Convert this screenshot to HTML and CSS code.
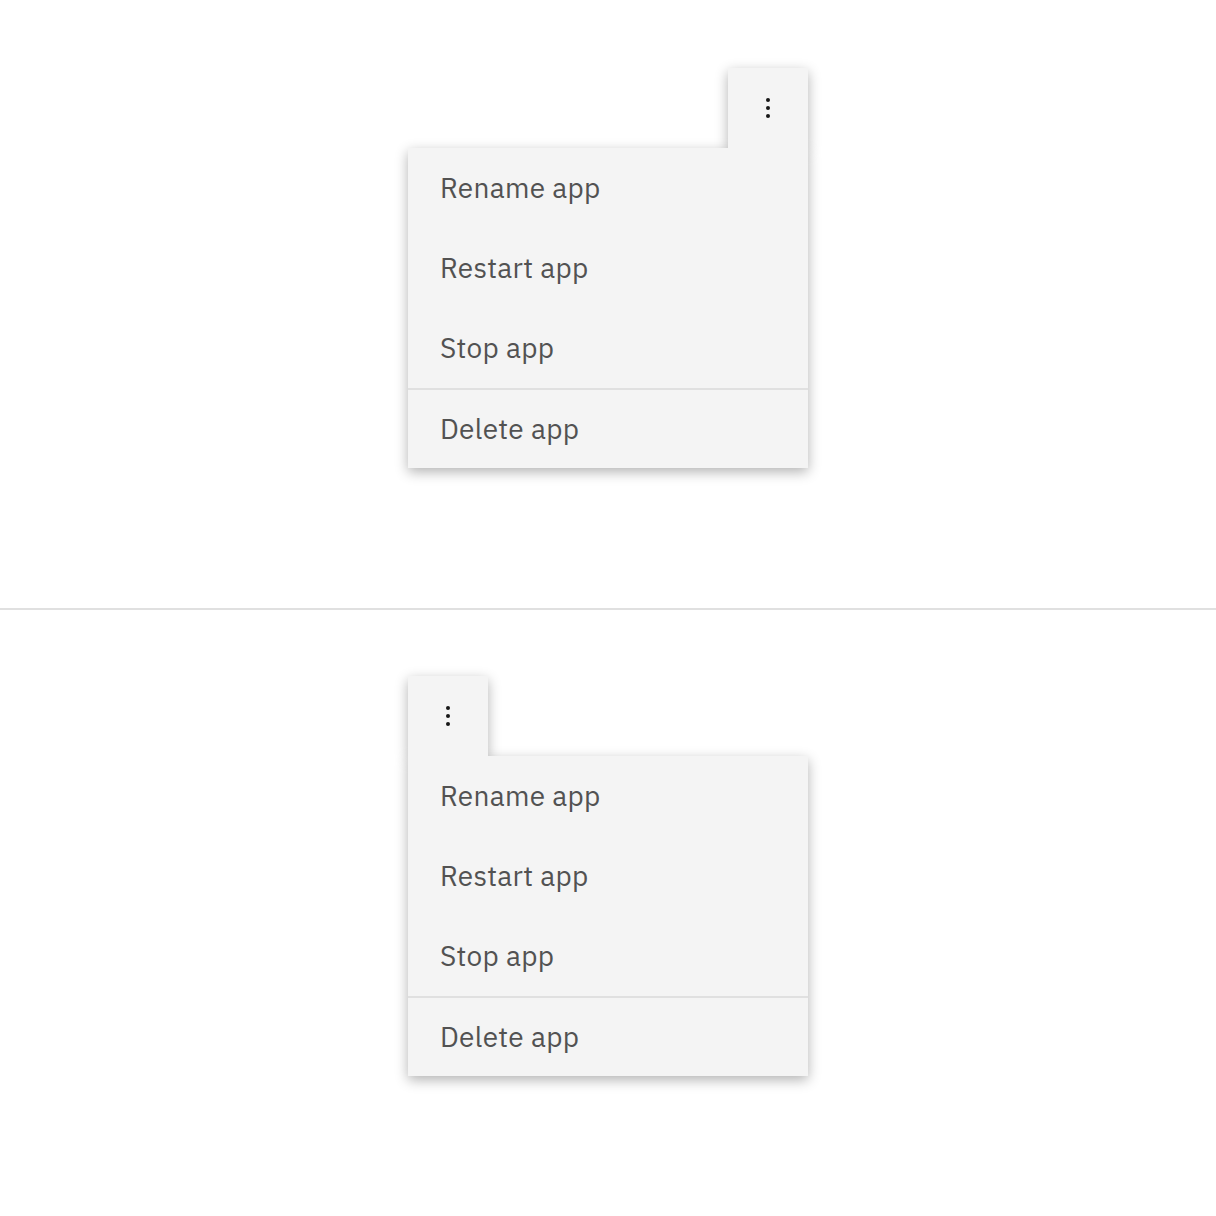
FILE: index.html
```html
<!DOCTYPE html>
<html lang="en">
<head>
<meta charset="utf-8">
<title>Overflow menu</title>
<link rel="stylesheet" href="styles.css">
</head>
<body>
<main class="page">
  <section class="demo demo--top">
    <div class="overflow overflow--flipped">
      <button class="trigger" aria-label="Options">
        <svg width="32" height="32" viewBox="0 0 32 32" aria-hidden="true"><circle cx="16" cy="8" r="2"/><circle cx="16" cy="16" r="2"/><circle cx="16" cy="24" r="2"/></svg>
      </button>
      <ul class="menu">
        <li class="item">Rename app</li>
        <li class="item">Restart app</li>
        <li class="item">Stop app</li>
        <li class="item item--divider">Delete app</li>
      </ul>
    </div>
  </section>
  <hr class="sep">
  <section class="demo demo--bottom">
    <div class="overflow">
      <button class="trigger" aria-label="Options">
        <svg width="32" height="32" viewBox="0 0 32 32" aria-hidden="true"><circle cx="16" cy="8" r="2"/><circle cx="16" cy="16" r="2"/><circle cx="16" cy="24" r="2"/></svg>
      </button>
      <ul class="menu">
        <li class="item">Rename app</li>
        <li class="item">Restart app</li>
        <li class="item">Stop app</li>
        <li class="item item--divider">Delete app</li>
      </ul>
    </div>
  </section>
</main>
</body>
</html>
```
FILE: styles.css
```css
* { box-sizing: border-box; }
html, body { margin: 0; padding: 0; background: #ffffff; }
body {
  font-family: "IBM Plex Sans", "Noto Sans", "Liberation Sans", sans-serif;
  color: #525252;
}
.page { width: 1216px; min-height: 1216px; }
.demo {
  display: flex;
  justify-content: center;
}
.demo--top { height: 608px; padding-top: 68px; }
.demo--bottom { height: 606px; padding-top: 66px; }
.sep {
  margin: 0;
  border: 0;
  height: 2px;
  background: #e0e0e0;
}
.overflow {
  width: 400px;
  display: flex;
  flex-direction: column;
  align-items: flex-start;
}
.overflow--flipped { align-items: flex-end; }
.trigger {
  position: relative;
  z-index: 1;
  width: 80px;
  height: 80px;
  padding: 0;
  border: 0;
  background: #f4f4f4;
  box-shadow: 0 4px 12px rgba(0, 0, 0, 0.3);
  display: flex;
  align-items: center;
  justify-content: center;
}
.trigger svg { fill: #161616; }
.menu {
  position: relative;
  z-index: 2;
  list-style: none;
  margin: 0;
  padding: 0;
  width: 400px;
  background: #f4f4f4;
  box-shadow: 0 4px 12px rgba(0, 0, 0, 0.3);
}
.menu::before {
  content: "";
  position: absolute;
  top: -20px;
  height: 20px;
  width: 80px;
  left: 0;
  background: #f4f4f4;
}
.overflow--flipped .menu::before { left: auto; right: 0; }
.item {
  height: 80px;
  display: flex;
  align-items: center;
  padding: 0 32px 2px;
  font-size: 28px;
  letter-spacing: 0.3px;
  color: #525252;
}
.item--divider { border-top: 2px solid #e0e0e0; }
```
